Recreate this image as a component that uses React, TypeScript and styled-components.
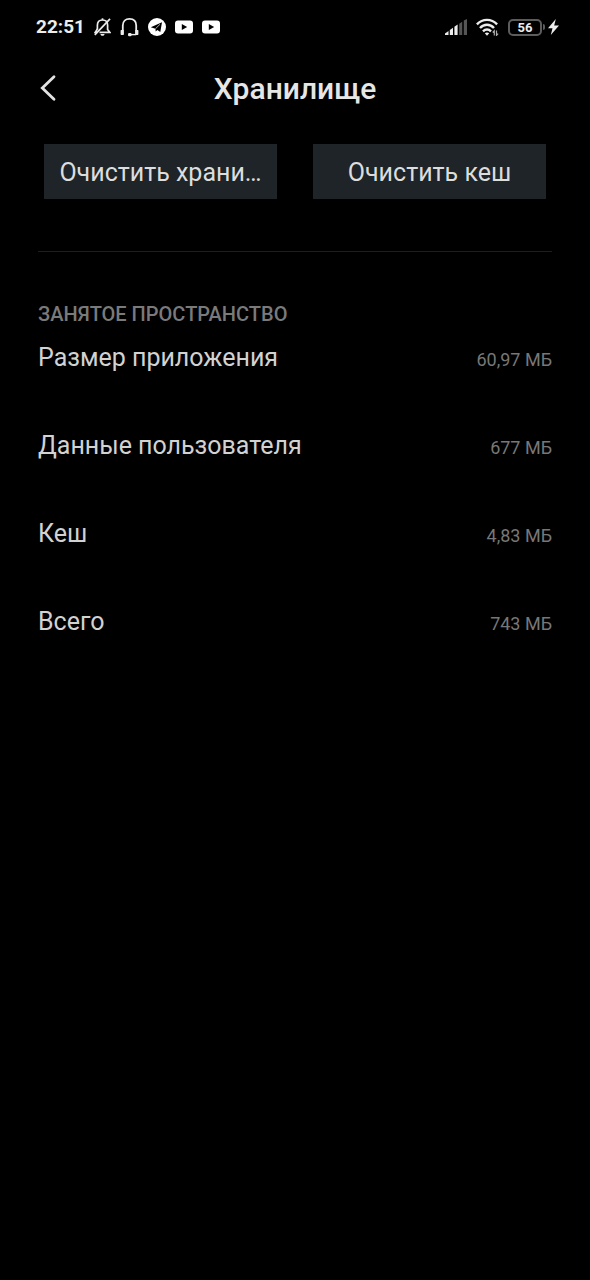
import React from "react";
import styled, { createGlobalStyle } from "styled-components";

const GlobalStyle = createGlobalStyle`
  *, *::before, *::after { box-sizing: border-box; }
  html { background: #000; }
  body {
    margin: 0;
    background: #000;
    color: #d2d2d2;
    font-family: Roboto, "Noto Sans", sans-serif;
  }
`;

const Screen = styled.div`
  min-height: 100vh;
  background: #000;
`;

const StatusBar = styled.div`
  display: flex;
  align-items: center;
  justify-content: space-between;
  height: 54px;
  padding: 0 31px 0 36px;
  color: #ececec;
`;

const StatusGroup = styled.div`
  display: flex;
  align-items: center;
  gap: 9px;

  svg { display: block; }
`;

const Clock = styled.time`
  font-size: 19px;
  line-height: 24px;
  font-weight: 700;
`;

const Battery = styled.div`
  display: flex;
  align-items: center;
  gap: 1px;
`;

const BatteryBody = styled.span`
  width: 34px;
  height: 17px;
  border: 2px solid #5c5c5c;
  border-radius: 5px;
  font-size: 13px;
  line-height: 13px;
  font-weight: 700;
  text-align: center;
`;

const BatteryTip = styled.span`
  width: 2px;
  height: 6px;
  margin-right: 2px;
  border-radius: 0 2px 2px 0;
  background: #5c5c5c;
`;

const Header = styled.header`
  display: grid;
  grid-template-columns: 40px 1fr 40px;
  align-items: center;
  height: 70px;
  padding: 0 28px;
`;

const BackButton = styled.button`
  display: flex;
  align-items: center;
  justify-content: center;
  width: 40px;
  height: 40px;
  padding: 0 0 2px;
  border: 0;
  background: none;
  color: #e2e2e2;
  cursor: pointer;
`;

const Title = styled.h1`
  margin: 0;
  color: #e6e6e6;
  font-size: 30px;
  line-height: 36px;
  font-weight: 500;
  text-align: center;
`;

const Actions = styled.div`
  display: grid;
  grid-template-columns: 1fr 1fr;
  gap: 36px;
  padding: 20px 44px 0;
`;

const ActionButton = styled.button`
  min-width: 0;
  height: 55px;
  padding: 2px 12px 0;
  border: 0;
  background: #1f2428;
  color: #dcdddd;
  font-family: inherit;
  font-size: 25px;
  line-height: 32px;
  white-space: nowrap;
  cursor: pointer;
`;

const Divider = styled.hr`
  height: 1px;
  margin: 52px 38px 0;
  border: 0;
  background: #1e1e1e;
`;

const Section = styled.section`
  padding: 50px 38px 0;
`;

const SectionTitle = styled.h2`
  margin: 0;
  color: #7a7a7a;
  font-size: 20px;
  line-height: 24px;
  font-weight: 500;
  text-transform: uppercase;
`;

const UsageList = styled.dl`
  display: grid;
  gap: 56px;
  margin: 16px 0 0;
`;

const UsageRow = styled.div`
  display: flex;
  align-items: baseline;
  justify-content: space-between;
`;

const UsageLabel = styled.dt`
  font-size: 25px;
  line-height: 32px;
`;

const UsageValue = styled.dd`
  margin: 0;
  color: #777;
  font-size: 18px;
  line-height: 24px;
`;

const usage = [
  { label: "Размер приложения", value: "60,97 МБ" },
  { label: "Данные пользователя", value: "677 МБ" },
  { label: "Кеш", value: "4,83 МБ" },
  { label: "Всего", value: "743 МБ" },
];

const MutedBell = () => (
  <svg width="17" height="20" viewBox="0 0 17 20" fill="none" stroke="currentColor" strokeWidth="1.7" aria-hidden="true">
    <path d="M3.4 12.5V8.2C3.4 5 5.3 3 8.500 3s5.100 2 5.100 5.200v4.300l2.200 2.900H5.500" />
    <path d="M3.400 12L1.200 15.400H3" />
    <path d="M8.500 3V1.300" />
    <path d="M6.300 17h4.400c-.5 1.300-1.200 1.800-2.200 1.800s-1.700-.5-2.200-1.800z" fill="currentColor" stroke="none" />
    <path d="M16 1.800L.8 17.800" />
  </svg>
);

const Headset = () => (
  <svg width="19" height="20" viewBox="0 0 19 20" fill="none" stroke="currentColor" strokeWidth="1.8" aria-hidden="true">
    <path d="M2.800 14V8.500C2.800 4.300 5.500 1.900 9.500 1.900s6.700 2.400 6.700 6.600V14" />
    <path d="M1.300 13.600v3.600h1.900v-3.600zM15.800 13.600v3.600h1.900v-3.600z" fill="currentColor" strokeWidth="1.400" strokeLinejoin="round" />
    <path d="M16.200 17.600H10" strokeWidth="1.400" />
    <rect x="8" y="16" width="3.600" height="3.200" rx="1.300" fill="currentColor" stroke="none" />
  </svg>
);

const Telegram = () => (
  <svg width="18" height="18" viewBox="0 0 18 18" aria-hidden="true">
    <circle cx="9" cy="9" r="9" fill="#fff" />
    <path d="M2.800 9.200L14 4.300 12.300 14 9.300 11.900 7.700 13.500 7.400 10.800z" fill="#000" />
    <path d="M7.400 10.800L12 6.300" stroke="#fff" strokeWidth=".7" />
  </svg>
);

const VideoBadge = () => (
  <svg width="18" height="14" viewBox="0 0 18 14" aria-hidden="true">
    <rect y=".5" width="18" height="13" rx="3" fill="#fff" />
    <path d="M6.800 4.100L12.200 7 6.800 9.900z" fill="#000" />
  </svg>
);

const Signal = () => (
  <svg width="22" height="16" viewBox="0 0 22 16" fill="currentColor" aria-hidden="true">
    <path d="M0 16v-1.500L3.500 12v4z" />
    <path d="M4.800 16v-5L8 8.700V16z" />
    <path d="M9.400 16V7.700l3.200-2.300V16z" />
    <path d="M14.200 16V4.700l3-2V16zM18.800 16V1.500L22 0v16z" fill="#555" />
  </svg>
);

const Wifi = () => (
  <svg width="23" height="18" viewBox="0 0 23 18" fill="none" stroke="currentColor" strokeWidth="2.400" aria-hidden="true">
    <path d="M.9 6.400C3.900 3.300 7.300 1.900 11 1.900s7.100 1.400 10.100 4.500" />
    <path d="M4 10c2-2.200 4.400-3.300 7-3.300s5 1.100 7 3.300" />
    <path d="M7 13.300c1.200-1.200 2.500-1.800 4-1.800s2.800.6 4 1.800" />
    <path d="M8.800 15.300Q11 13.600 13.200 15.300L11 17.800z" fill="currentColor" stroke="none" />
    <path d="M18.300 17.600v-4.800L16.700 14.500M20.500 12.600v4.800L22.100 15.700" stroke="#aaa" strokeWidth="1.200" />
  </svg>
);

const Bolt = () => (
  <svg width="11" height="16" viewBox="0 0 11 16" fill="currentColor" aria-hidden="true">
    <path d="M7.800 0L0 9.200H4.500L2.800 16 11 6.500H6.200z" />
  </svg>
);

const BackChevron = () => (
  <svg width="18" height="28" viewBox="0 0 18 28" fill="none" stroke="currentColor" strokeWidth="2.800" strokeLinecap="round" strokeLinejoin="miter" aria-hidden="true">
    <path d="M15 2.700L3.300 14 15 25.300" />
  </svg>
);

export default function App() {
  return (
    <Screen>
      <GlobalStyle />
      <StatusBar>
        <StatusGroup>
          <Clock>22:51</Clock>
          <MutedBell />
          <Headset />
          <Telegram />
          <VideoBadge />
          <VideoBadge />
        </StatusGroup>
        <StatusGroup>
          <Signal />
          <Wifi />
          <Battery>
            <BatteryBody>56</BatteryBody>
            <BatteryTip />
            <Bolt />
          </Battery>
        </StatusGroup>
      </StatusBar>
      <Header>
        <BackButton type="button" aria-label="Назад">
          <BackChevron />
        </BackButton>
        <Title>Хранилище</Title>
      </Header>
      <main>
        <Actions>
          <ActionButton type="button">Очистить храни…</ActionButton>
          <ActionButton type="button">Очистить кеш</ActionButton>
        </Actions>
        <Divider />
        <Section>
          <SectionTitle>Занятое пространство</SectionTitle>
          <UsageList>
            {usage.map((item) => (
              <UsageRow key={item.label}>
                <UsageLabel>{item.label}</UsageLabel>
                <UsageValue>{item.value}</UsageValue>
              </UsageRow>
            ))}
          </UsageList>
        </Section>
      </main>
    </Screen>
  );
}
